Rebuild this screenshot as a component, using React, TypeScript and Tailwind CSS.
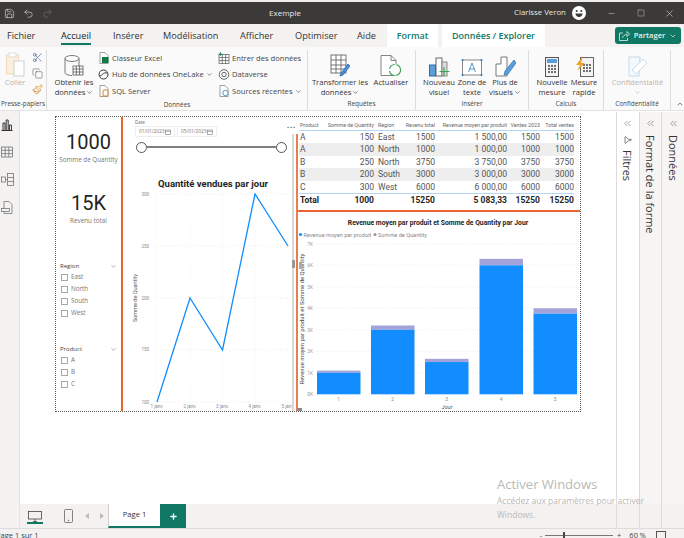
import type { ReactNode } from "react";
import { ChevronDown, ChevronUp, ChevronsLeft, Copy, Filter, Minus, Paintbrush, Redo2, Save, Scissors, Square, Undo2, X, Plus } from "lucide-react";

const UI = "font-['Open_Sans','Noto_Sans',sans-serif]";
const GREEN = "#117865";

function Big({ w, icon, lines, faded, className }: { w: number; icon: ReactNode; lines: ReactNode[]; faded?: boolean; className?: string }) {
  return (
    <div className={`flex flex-col items-center shrink-0 ${className ?? ""}`} style={{ width: w }}>
      <div className="h-[27px] flex items-end justify-center">{icon}</div>
      {lines.map((l, i) => (
        <div key={i} className={`h-[10px] leading-[10px] whitespace-nowrap text-[7.6px] ${faded ? "text-[#b5b3b1]" : "text-[#333]"}`}>
          {l}
        </div>
      ))}
    </div>
  );
}

function Small({ icon, text, caret }: { icon: ReactNode; text: string; caret?: boolean }) {
  return (
    <div className="h-[16.5px] flex items-center gap-[2px] whitespace-nowrap text-[7.6px] text-[#444]">
      <span className="w-[13px] flex justify-center">{icon}</span>
      {text}
      {caret && <ChevronDown size={7} />}
    </div>
  );
}

function Group({ w, label, children }: { w: number; label: string; children: ReactNode }) {
  return (
    <div className="h-full flex flex-col border-r border-[#dedcda] shrink-0" style={{ width: w }}>
      <div className="flex-1 flex">{children}</div>
      <div className="h-[11px] leading-[10px] text-center text-[6.4px] text-[#444] whitespace-nowrap">{label}</div>
    </div>
  );
}

function Caret({ text }: { text: string }) {
  return (
    <span className="inline-flex items-center gap-[1px]">
      {text}
      <ChevronDown size={7} />
    </span>
  );
}

function Check({ label }: { label: string }) {
  return (
    <div className="h-[12px] flex items-center gap-[3px] text-[6.3px] text-[#777] pl-[1px]">
      <span className="w-[7px] h-[7px] border border-[#a8a8a8] bg-white" />
      {label}
    </div>
  );
}

function Slicer({ title, items }: { title: string; items: string[] }) {
  return (
    <div className="w-[57px]">
      <div className="flex items-center justify-between h-[10px] text-[6px] text-[#444]">
        {title}
        <ChevronDown size={7} className="text-[#777]" />
      </div>
      {items.map((i) => (
        <Check key={i} label={i} />
      ))}
    </div>
  );
}

const rows = [
  ["A", "150", "East", "1500", "1 500,00", "1500", "1500"],
  ["A", "100", "North", "1000", "1 000,00", "1000", "1000"],
  ["B", "250", "North", "3750", "3 750,00", "3750", "3750"],
  ["B", "200", "South", "3000", "3 000,00", "3000", "3000"],
  ["C", "300", "West", "6000", "6 000,00", "6000", "6000"],
];
const tableCols = "grid grid-cols-[25px_50px_29px_32px_72px_33px_34px]";

function LineChart() {
  const ys = [403, 351, 299, 247, 195];
  const xs = [157, 190, 222.5, 255, 288];
  return (
    <svg viewBox="123 165 170 247" className="w-[170px] h-[247px] block" fontFamily="Roboto, sans-serif">
      {ys.map((y) => (
        <line key={y} x1="155" x2="290" y1={y} y2={y} stroke="#e6e6e6" strokeWidth="0.6" strokeDasharray="1 1.5" />
      ))}
      {xs.map((x) => (
        <line key={x} x1={x} x2={x} y1="195" y2="403" stroke="#eeeeee" strokeWidth="0.6" strokeDasharray="1 1.5" />
      ))}
      {["300", "250", "200", "150", "100"].map((t, i) => (
        <text key={t} x="149" y={[197, 249, 301, 352, 405][i]} fontSize="4.5" fill="#888" textAnchor="end">{t}</text>
      ))}
      {["1 janv.", "2 janv.", "3 janv.", "4 janv.", "5 janv."].map((t, i) => (
        <text key={t} x={xs[i]} y="409" fontSize="4.5" fill="#888" textAnchor="middle">{t}</text>
      ))}
      <text transform="translate(137 299) rotate(-90)" fontSize="5.5" fill="#555" textAnchor="middle">Somme de Quantity</text>
      <text x="213" y="188" fontSize="9.5" fontWeight="700" fill="#252423" textAnchor="middle">Quantité vendues par jour</text>
      <polyline points="157,403 190,299 222.5,351 255,195 288,247" fill="none" stroke="#118dff" strokeWidth="1.3" />
    </svg>
  );
}

function BarChart() {
  const base = 394.3;
  const k = 21.5;
  const bars = [
    { x: 318, v: 1000, q: 100, l: "1" },
    { x: 372, v: 3000, q: 200, l: "2" },
    { x: 426, v: 1500, q: 150, l: "3" },
    { x: 480.5, v: 6000, q: 300, l: "4" },
    { x: 534.5, v: 3750, q: 250, l: "5" },
  ];
  return (
    <svg viewBox="299 212 282 199" className="w-[282px] h-[199px] block" fontFamily="Roboto, sans-serif">
      <text x="439" y="225" fontSize="6.8" fontWeight="700" fill="#252423" textAnchor="middle">
        Revenue moyen par produit et Somme de Quantity par Jour
      </text>
      <circle cx="301.5" cy="234.5" r="1.6" fill="#118dff" />
      <text x="304.5" y="236.5" fontSize="5.6" fill="#888">Revenue moyen par produit</text>
      <circle cx="376" cy="234.5" r="1.6" fill="#999" />
      <text x="379" y="236.5" fontSize="5.6" fill="#888">Somme de Quantity</text>
      {[0, 1, 2, 3, 4, 5, 6, 7].map((n) => (
        <g key={n}>
          <text x="314" y={base - n * k + 1.8} fontSize="4.8" fill="#999" textAnchor="end">{n}K</text>
          {n > 0 && <line x1="316" x2="580" y1={base - n * k} y2={base - n * k} stroke="#e4e4e4" strokeWidth="0.6" strokeDasharray="1 1.5" />}
        </g>
      ))}
      {bars.map((b) => {
        const blue = (b.v / 1000) * k;
        const top = (b.q / 1000) * k;
        return (
          <g key={b.l}>
            <rect x={b.x} y={base - blue - top} width="43.5" height={top} fill="#a3a3d9" />
            <rect x={b.x} y={base - blue} width="43.5" height={blue} fill="#118dff" />
            <text x={b.x + 21.7} y="401" fontSize="4.8" fill="#888" textAnchor="middle">{b.l}</text>
          </g>
        );
      })}
      <text x="448" y="409" fontSize="5.5" fill="#555" textAnchor="middle">Jour</text>
      <text transform="translate(304.5 319) rotate(-90)" fontSize="5.9" fill="#444" textAnchor="middle">
        Revenue moyen par produit et Somme de Quantity
      </text>
    </svg>
  );
}

function CalIcon() {
  return (
    <svg width="6" height="6" viewBox="0 0 6 6" fill="none" stroke="#777" strokeWidth="0.6">
      <rect x="0.5" y="1" width="5" height="4.5" />
      <line x1="0.5" x2="5.5" y1="2.4" y2="2.4" />
    </svg>
  );
}

function Pane({ label, white, h }: { label: string; white?: boolean; h?: ReactNode }) {
  return (
    <div className="flex-1 border-l border-[#dddbd9] flex flex-col bg-[#f6f5f4]">
      <div className={`flex-1 flex flex-col items-center pt-[6px] ${white ? "bg-white" : ""}`}>
        <ChevronsLeft size={11} className="text-[#555]" strokeWidth={1.2} />
        {h}
        <div className="[writing-mode:vertical-rl] text-[11px] leading-none mt-[6px] text-[#333] whitespace-nowrap">{label}</div>
      </div>
      <div className="h-[24px] bg-[#f3f2f1]" />
    </div>
  );
}

export default function App() {
  return (
    <div className={`relative w-[684px] h-[538px] overflow-hidden bg-white flex flex-col ${UI}`}>
      {/* title bar */}
      <div className="h-[2px] bg-[#eeeeee]" />
      <div className="h-[22px] bg-[#3b3a39] flex items-center text-[#e8e6e4] text-[8px] shrink-0">
        <div className="flex items-center gap-[8px] pl-[4px] w-[265px]">
          <Save size={11} strokeWidth={1.3} />
          <Undo2 size={11} strokeWidth={1.3} />
          <Redo2 size={11} strokeWidth={1.3} className="text-[#777]" />
        </div>
        <span className="w-[249px] text-[8px] pl-[4px]">Exemple</span>
        <span className="text-[7.8px] whitespace-nowrap w-[58px]">Clarisse Veron</span>
        <svg width="14" height="14" viewBox="0 0 14 14" className="shrink-0">
          <circle cx="7" cy="7" r="7" fill="#fff" />
          <circle cx="4.7" cy="5" r="1" fill="#3b3a39" />
          <circle cx="9.3" cy="5" r="1" fill="#3b3a39" />
          <path d="M3.5 7.5h7c0 2-1.5 3.5-3.5 3.5S3.500 9.500 3.500 7.500z" fill="#3b3a39" />
        </svg>
        <Minus size={9} className="ml-[21px]" strokeWidth={1.2} />
        <Square size={8} className="ml-[21px]" strokeWidth={1.2} />
        <X size={11} className="ml-[19px]" strokeWidth={1.2} />
      </div>

      {/* tabs */}
      <div className="h-[23px] bg-[#f3f2f1] flex items-center text-[9.2px] text-[#333] relative shrink-0 pl-[7px]">
        <span className="w-[54px]">Fichier</span>
        <span className="w-[52px]">
          <span className="relative font-medium text-[#222] inline-block">
            Accueil
            <span className="absolute left-0 right-0 top-[14px] h-[2px]" style={{ background: GREEN }} />
          </span>
        </span>
        <span className="w-[50px]">Insérer</span>
        <span className="w-[77px]">Modélisation</span>
        <span className="w-[55px]">Afficher</span>
        <span className="w-[62px]">Optimiser</span>
        <span className="w-[30px]">Aide</span>
        <span className="w-[51px] bg-white h-full flex items-center justify-center font-semibold text-[9px] text-[#117865]">Format</span>
        <span className="ml-[4px] w-[103px] bg-white h-full flex items-center justify-center font-semibold text-[9px] text-[#117865] whitespace-nowrap">Données / Explorer</span>
        <span className="absolute left-[615px] top-[3px] w-[66px] h-[17px] rounded-[3px] text-[#e6f2ef] flex items-center justify-center gap-[4px] text-[7.6px] font-semibold" style={{ background: GREEN }}>
          <svg width="11" height="10" viewBox="0 0 11 10" fill="none" stroke="currentColor" strokeWidth="0.8">
            <path d="M4 2H.5v7.500h8V7" />
            <path d="M3.500 7c.5-2.500 2.500-3.500 4.500-3.500V5.500L10.500 3 8 .5v2" />
          </svg>
          Partager
          <ChevronDown size={8} />
        </span>
      </div>

      {/* ribbon */}
      <div className="h-[64px] bg-[#fbfafa] flex pt-[3px] relative border-b border-[#e4e2e0] shrink-0">
        <Group w={47} label="Presse-papiers">
          <Big
            w={30}
            faded
            icon={
              <svg width="19" height="25" viewBox="0 0 19 25" fill="none">
                <rect x="0.5" y="3" width="12" height="19" fill="#fdeedd" stroke="#eed9bd" />
                <rect x="3" y="1" width="7" height="4" fill="#fff" stroke="#ddd" />
                <rect x="8" y="9" width="10" height="15" fill="#fff" stroke="#cfcfcf" />
              </svg>
            }
            lines={["Coller"]}
          />
          <div className="flex flex-col items-center w-[14px] gap-[5px] pt-[2px]">
            <Scissors size={11} className="text-[#3a5a8c]" strokeWidth={1.4} />
            <Copy size={11} className="text-[#555]" strokeWidth={1.2} />
            <Paintbrush size={11} className="text-[#d9821e]" strokeWidth={1.6} />
          </div>
        </Group>
        <Group w={261} label="Données">
          <Big
            w={50}
            className="ml-[2px]"
            icon={
              <svg width="20" height="22" viewBox="0 0 20 22" fill="none" stroke="#555" strokeWidth="0.8">
                <ellipse cx="8" cy="3.5" rx="7" ry="3" fill="#fff" />
                <path d="M1 3.5v14c0 1.6 3 3 7 3M15 3.5v8" />
                <rect x="9" y="11" width="10" height="9" fill="#fff" />
                <path d="M9 14h10M9 17h10M12.3 11v9M15.6 11v9" />
              </svg>
            }
            lines={["Obtenir les", <Caret text="données" />]}
          />
          <div className="w-[120px] -ml-[2px]">
            <Small
              icon={
                <svg width="10" height="12" viewBox="0 0 10 12" fill="none">
                  <path d="M1 .5h5l3 3v8H1z" fill="#fff" stroke="#777" strokeWidth="0.7" />
                  <rect x="3" y="5" width="6.5" height="6" fill="#107c41" />
                </svg>
              }
              text="Classeur Excel"
            />
            <Small
              icon={
                <svg width="11" height="11" viewBox="0 0 11 11" fill="none" stroke="#333" strokeWidth="1">
                  <circle cx="5.5" cy="5.5" r="4.5" />
                  <path d="M2 7c3-1 3-4 7-3" />
                </svg>
              }
              text="Hub de données OneLake"
              caret
            />
            <Small
              icon={
                <svg width="10" height="12" viewBox="0 0 10 12" fill="none">
                  <path d="M1 .5h5l3 3v8H1z" fill="#fff" stroke="#777" strokeWidth="0.7" />
                  <rect x="4" y="5" width="5" height="6" rx="1" fill="#fff" stroke="#d9821e" />
                </svg>
              }
              text="SQL Server"
            />
          </div>
          <div>
            <Small
              icon={
                <svg width="12" height="12" viewBox="0 0 12 12" fill="none" stroke="#555" strokeWidth="0.7">
                  <rect x="1" y="2.5" width="10" height="9" fill="#fff" />
                  <path d="M1 5.5h10M1 8.5h10M4.3 2.5v9M7.6 2.500v9" />
                  <path d="M2.5 0v4M.5 2h4" stroke="#107c41" />
                </svg>
              }
              text="Entrer des données"
            />
            <Small
              icon={
                <svg width="12" height="11" viewBox="0 0 12 11" fill="none" stroke="#444" strokeWidth="0.8">
                  <circle cx="6" cy="5.5" r="4.8" />
                  <circle cx="6" cy="5.5" r="2.2" />
                </svg>
              }
              text="Dataverse"
            />
            <Small
              icon={
                <svg width="10" height="12" viewBox="0 0 10 12" fill="none">
                  <path d="M1 .5h5l3 3v8H1z" fill="#fff" stroke="#777" strokeWidth="0.7" />
                  <circle cx="6.5" cy="8" r="2.7" fill="#fff" stroke="#2a7ab8" strokeWidth="0.8" />
                </svg>
              }
              text="Sources récentes"
              caret
            />
          </div>
        </Group>
        <Group w={108} label="Requêtes">
          <Big
            w={64}
            icon={
              <svg width="20" height="23" viewBox="0 0 20 23" fill="none" stroke="#555" strokeWidth="0.8">
                <rect x="1" y="1" width="15" height="18" fill="#fff" />
                <path d="M1 6h15M1 11h15M1 15h15M6 1v18M11 1v18" />
                <path d="M18 10l-7 9-1 3 3-1 7-9z" fill="#4a90d9" stroke="#2a6cb0" />
              </svg>
            }
            lines={["Transformer les", <Caret text="données" />]}
          />
          <Big
            w={38}
            icon={
              <svg width="22" height="22" viewBox="0 0 22 22" fill="none" stroke="#666" strokeWidth="0.8">
                <path d="M1 .5h10l5 5v15H1z" fill="#fff" />
                <path d="M11 .5v5h5" />
                <circle cx="15" cy="15" r="5.5" fill="#fff" stroke="#3aa655" strokeWidth="1.2" strokeDasharray="7 2" />
              </svg>
            }
            lines={["Actualiser"]}
          />
        </Group>
        <Group w={113} label="Insérer">
          <Big
            w={40}
            className="ml-[3px]"
            icon={
              <svg width="21" height="20" viewBox="0 0 21 20" fill="none">
                <rect x="0.5" y="8" width="6" height="11" fill="#5a9fdb" stroke="#2a6cb0" />
                <rect x="7" y="1" width="6" height="18" fill="#fff" stroke="#666" />
                <rect x="13" y="5" width="5" height="14" fill="#ddd" stroke="#888" />
                <path d="M15 10v9M10.5 14.5h10" stroke="#3aa655" strokeWidth="1.2" />
              </svg>
            }
            lines={["Nouveau", "visuel"]}
          />
          <Big
            w={26}
            icon={
              <svg width="22" height="19" viewBox="0 0 22 19" fill="none">
                <rect x="1.5" y="2" width="19" height="15" fill="#fff" stroke="#555" strokeWidth="0.7" />
                <circle cx="1.5" cy="2" r="1" fill="#2a7ab8" />
                <circle cx="20.5" cy="2" r="1" fill="#2a7ab8" />
                <circle cx="1.5" cy="17" r="1" fill="#2a7ab8" />
                <circle cx="20.5" cy="17" r="1" fill="#2a7ab8" />
                <path d="M7.5 14L11 5l3.5 9M8.8 11h4.4" stroke="#2a7ab8" strokeWidth="0.8" />
              </svg>
            }
            lines={["Zone de", "texte"]}
          />
          <Big
            w={40}
            icon={
              <svg width="21" height="21" viewBox="0 0 21 21" fill="none">
                <path d="M1 8h5V1h6v19H1z" fill="#fff" stroke="#555" strokeWidth="0.8" />
                <path d="M19 4l-9 11-1 4 4-1 8-11z" fill="#5a9fdb" stroke="#2a6cb0" strokeWidth="0.7" />
              </svg>
            }
            lines={["Plus de", <Caret text="visuels" />]}
          />
        </Group>
        <Group w={75} label="Calculs">
          <Big
            w={40}
            className="ml-[3px]"
            icon={
              <svg width="14" height="20" viewBox="0 0 14 20" fill="none">
                <rect x="0.5" y="0.5" width="13" height="19" fill="#f3f3f3" stroke="#555" />
                <rect x="2" y="2" width="10" height="4" fill="#5a9fdb" />
                <path d="M3 9h2M6 9h2M9 9h2M3 12h2M6 12h2M9 12h2M3 15h2M6 15h2M9 15h2" stroke="#444" strokeWidth="1.4" />
              </svg>
            }
            lines={["Nouvelle", "mesure"]}
          />
          <Big
            w={24}
            icon={
              <svg width="19" height="21" viewBox="0 0 19 21" fill="none">
                <rect x="5.5" y="1.5" width="13" height="19" fill="#f3f3f3" stroke="#666" />
                <path d="M8 9h2M11 9h2M14 9h2M8 12h2M11 12h2M14 12h2M8 15h2M11 15h2M14 15h2" stroke="#444" strokeWidth="1.4" />
                <path d="M8 0L1 9h4l-3 6 8-8H6z" fill="#f2a12e" />
              </svg>
            }
            lines={["Mesure", "rapide"]}
          />
        </Group>
        <Group w={67} label="Confidentialité">
          <Big
            w={67}
            faded
            icon={
              <svg width="20" height="21" viewBox="0 0 20 21" fill="none" stroke="#bcd6e8" strokeWidth="0.9">
                <path d="M1 1h11l-1 19H1z" fill="#f4f9fc" />
                <path d="M4 14L15 3l4 4L8 18z" fill="#fff" />
              </svg>
            }
            lines={["Confidentialité", <ChevronDown size={7} className="mt-[2px]" />]}
          />
        </Group>
        <ChevronUp size={8} className="absolute left-[676px] top-[53px] text-[#444]" />
      </div>

      {/* body */}
      <div className="flex-1 flex min-h-0 pt-[1px]">
        <div className="w-[20px] bg-[#f3f2f1] border-r border-[#e6e4e2] flex flex-col items-start pl-[1px] pt-[8px] gap-[15px] -mt-[1px] shrink-0">
          <svg width="12" height="12" viewBox="0 0 12 12" fill="none" stroke="#333" strokeWidth="1">
            <path d="M.5 11.5h11M2 11V4h2v7M5.2 11V1h2v10M8.4 11V6h2v5" />
          </svg>
          <svg width="12" height="12" viewBox="0 0 12 12" fill="none" stroke="#666" strokeWidth="0.7">
            <rect x="0.5" y="1" width="11" height="10" />
            <path d="M.5 4.3h11M.5 7.6h11M4.2 1v10M7.8 1v10" />
          </svg>
          <svg width="13" height="13" viewBox="0 0 13 13" fill="none" stroke="#666" strokeWidth="0.7">
            <rect x="6.5" y="0.5" width="6" height="12" />
            <path d="M6.5 4.5h6M6.5 8.5h6" />
            <rect x="0.5" y="4" width="4" height="5" />
            <path d="M4.5 6.5h2" />
          </svg>
          <svg width="12" height="13" viewBox="0 0 12 13" fill="none" stroke="#666" strokeWidth="0.7">
            <path d="M3 .5h5l3 3v9H3z" />
            <rect x="0.5" y="7.5" width="8" height="3" fill="#f3f2f1" />
          </svg>
        </div>

        <div className="flex-1 flex flex-col min-w-0">
          <div className="flex-1 bg-white pl-[35px] pt-[4px]">
            {/* report page */}
            <div className="w-[526px] h-[296px] border border-dotted border-[#555] flex relative">
              <div className="w-[67px] border-r-2 border-[#e8652f] flex flex-col items-center shrink-0">
                <div className="text-[20px] leading-[24px] mt-[13px] text-[#252423] font-['Roboto',sans-serif]">1000</div>
                <div className="text-[6.3px] leading-[8px] text-[#777] whitespace-nowrap mt-[2px]">Somme de Quantity</div>
                <div className="text-[20px] leading-[24px] mt-[27px] text-[#252423] font-['Roboto',sans-serif]">15K</div>
                <div className="text-[6.3px] leading-[8px] text-[#777] mt-[2px]">Revenu total</div>
                <div className="mt-[36px]">
                  <Slicer title="Region" items={["East", "North", "South", "West"]} />
                </div>
                <div className="mt-[25px]">
                  <Slicer title="Product" items={["A", "B", "C"]} />
                </div>
              </div>

              <div className="w-[175px] shrink-0 relative">
                <div className="pl-[12px] pt-[1px]">
                  <div className="text-[4.5px] leading-[8px] text-[#666]">Date</div>
                  <div className="flex gap-[2px]">
                    {["01/01/2023", "05/01/2023"].map((d) => (
                      <div key={d} className="w-[40px] h-[11px] border border-[#eeeeee] flex items-center justify-between px-[3px] text-[4.8px] text-[#777]">
                        {d}
                        <CalIcon />
                      </div>
                    ))}
                  </div>
                </div>
                <div className="ml-[13px] w-[151px] h-[12px] mt-[4px] flex items-center">
                  <span className="w-[11px] h-[11px] rounded-full border border-[#555] bg-white shrink-0" />
                  <span className="flex-1 h-[2px] bg-[#808080]" />
                  <span className="w-[11px] h-[11px] rounded-full border border-[#555] bg-white shrink-0" />
                </div>
                <div className="mt-[11px]">
                  <LineChart />
                </div>
                <div className="absolute left-[169px] top-[17px] bottom-0 w-[2px] bg-[#d8d8d8]" />
                <div className="absolute left-[173px] top-[17px] bottom-0 w-[2px] bg-[#e87d50]" />
                <div className="absolute left-[169px] top-[143px] w-[3px] h-[8px] bg-[#999]" />
                <div className="absolute left-[176px] top-[145px] w-[3px] h-[7px] bg-[#aaa]" />
                <div className="absolute left-[174px] bottom-0 w-[5px] h-[3px] bg-[#888]" />
                <div className="absolute left-[164px] top-[5px] text-[7px] leading-[7px] tracking-[1px] text-[#333] font-bold">...</div>
              </div>

              <div className="flex-1 flex flex-col min-w-0">
                <div className="h-[95px] border-b-2 border-[#e8652f] pl-[1px] pt-[2px]">
                  <div className="w-[275px] text-[8.5px] leading-[12.4px] text-[#555] font-['Roboto',sans-serif]">
                    <div className={`${tableCols} text-[5.3px] text-[#666] h-[12px] items-center border-b border-[#b3d7f5] whitespace-nowrap`}>
                      <span className="pl-[1px]">Product</span>
                      <span className="text-right">Somme de Quantity</span>
                      <span className="pl-[4px]">Region</span>
                      <span className="text-right">Revenu total</span>
                      <span className="text-right">Revenue moyen par produit</span>
                      <span className="text-right">Ventes 2023</span>
                      <span className="text-right">Total ventes</span>
                    </div>
                    {rows.map((r, i) => (
                      <div key={i} className={`${tableCols} ${i % 2 ? "bg-[#eeeeee]" : ""}`}>
                        <span className="pl-[1px]">{r[0]}</span>
                        <span className="text-right">{r[1]}</span>
                        <span className="pl-[4px]">{r[2]}</span>
                        <span className="text-right">{r[3]}</span>
                        <span className="text-right">{r[4]}</span>
                        <span className="text-right">{r[5]}</span>
                        <span className="text-right">{r[6]}</span>
                      </div>
                    ))}
                    <div className={`${tableCols} font-bold text-[#252423] border-t border-[#b3d7f5] h-[13px] items-center`}>
                      <span className="pl-[1px]">Total</span>
                      <span className="text-right">1000</span>
                      <span />
                      <span className="text-right">15250</span>
                      <span className="text-right">5 083,33</span>
                      <span className="text-right">15250</span>
                      <span className="text-right">15250</span>
                    </div>
                  </div>
                </div>
                <BarChart />
              </div>
            </div>
          </div>

          {/* page tabs */}
          <div className="h-[24px] bg-[#f3f2f1] flex items-stretch text-[#333] shrink-0">
            <div className="ml-[7px] w-[16px] flex flex-col items-center justify-center relative">
              <svg width="14" height="11" viewBox="0 0 14 11" fill="none" stroke="#444" strokeWidth="0.8">
                <rect x="0.5" y="0.5" width="13" height="7.5" />
                <path d="M5 10.5h4M7 8v2" />
              </svg>
              <span className="absolute left-0 right-0 bottom-[4px] h-[2px]" style={{ background: GREEN }} />
            </div>
            <div className="ml-[21px] w-[9px] flex items-center">
              <svg width="9" height="14" viewBox="0 0 9 14" fill="none" stroke="#666" strokeWidth="0.8">
                <rect x="0.5" y="0.5" width="8" height="13" rx="1" />
                <circle cx="4.5" cy="11.5" r="0.4" />
              </svg>
            </div>
            <div className="ml-[12px] flex items-center gap-[11px]">
              <span className="w-0 h-0 border-y-[3px] border-y-transparent border-r-[4px] border-r-[#bdbbb9]" />
              <span className="w-0 h-0 border-y-[3px] border-y-transparent border-l-[4px] border-l-[#bdbbb9]" />
            </div>
            <div className="ml-[4px] w-[52px] bg-white border-l border-[#cfcdcb] flex items-center justify-center text-[7.6px] font-medium" style={{ borderBottom: `2px solid ${GREEN}` }}>
              Page 1
            </div>
            <div className="w-[26px] flex items-center justify-center text-white" style={{ background: GREEN }}>
              <Plus size={9} strokeWidth={3.5} />
            </div>
          </div>
        </div>

        {/* right panes */}
        <div className="w-[68px] flex shrink-0">
          <Pane white label="Filtres" h={<Filter size={8} className="text-[#444] -rotate-90 mt-[7px]" />} />
          <Pane label="Format de la forme" />
          <Pane label="Données" />
        </div>
      </div>

      {/* status bar */}
      <div className="h-[10px] bg-[#f3f2f1] border-t border-[#dedcda] text-[7.5px] leading-[9px] text-[#444] shrink-0 flex items-center overflow-hidden pt-[3px]">
        <span className="-ml-[4px] whitespace-nowrap">Page 1 sur 1</span>
        <span className="ml-[501px]">-</span>
        <span className="ml-[3px] w-[68px] h-px bg-[#777] relative">
          <span className="absolute left-[18px] -top-[3px] w-[2px] h-[7px] bg-[#444]" />
        </span>
        <span className="ml-[4px]">+</span>
        <span className="ml-[8px] whitespace-nowrap">60 %</span>
        <span className="ml-[10px] w-[10px] h-[8px] border border-[#555]" />
      </div>

      {/* windows watermark */}
      <div className="absolute left-[497px] top-[475px] text-[#b9b8b6] pointer-events-none">
        <div className="text-[13px] leading-[18px] whitespace-nowrap">Activer Windows</div>
        <div className="text-[8.5px] leading-[14px] mt-[1px] whitespace-nowrap">Accédez aux paramètres pour activer</div>
        <div className="text-[8.5px] leading-[14px]">Windows.</div>
      </div>
    </div>
  );
}
